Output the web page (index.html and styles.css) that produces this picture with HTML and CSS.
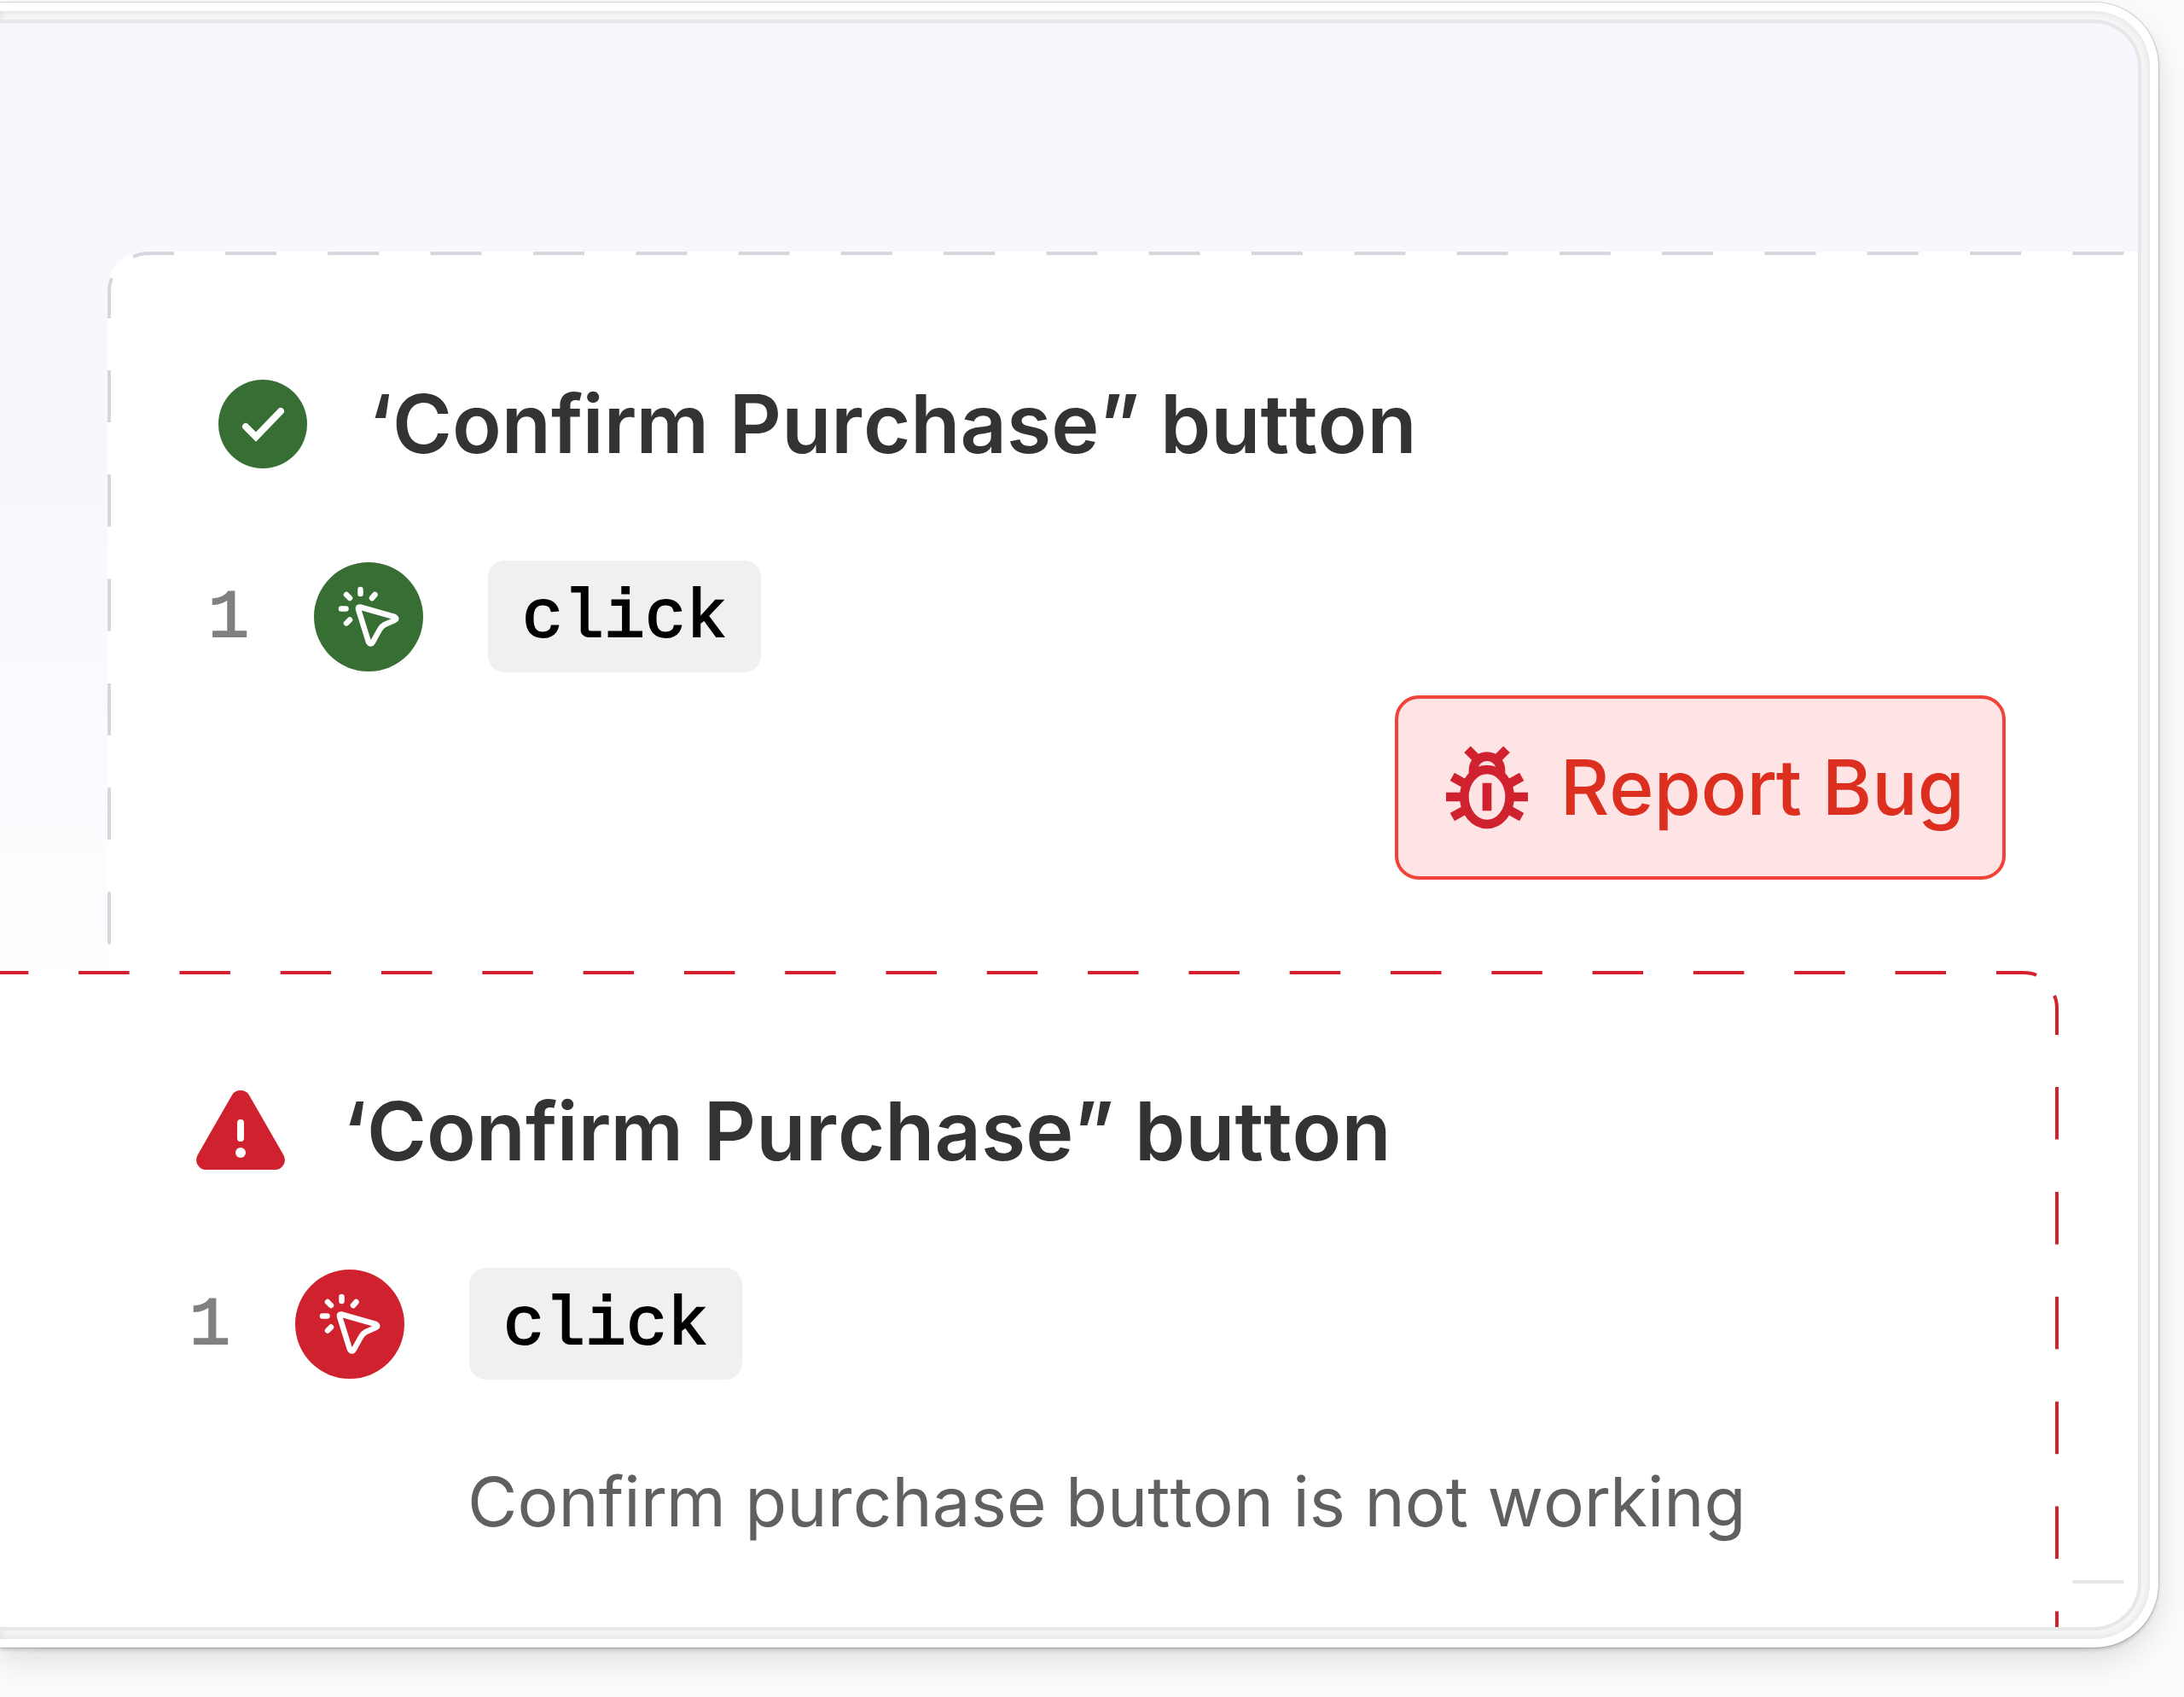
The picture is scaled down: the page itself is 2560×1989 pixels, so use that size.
FILE: index.html
```
<!DOCTYPE html>
<html lang="en">
<head>
<meta charset="utf-8">
<title>Test run</title>
<link rel="stylesheet" href="styles.css">
</head>
<body>
<svg class="sprite" aria-hidden="true">
  <symbol id="cursor-click" viewBox="0 0 128 128">
    <g fill="none" stroke="#fff" stroke-width="6.5" stroke-linecap="round" stroke-linejoin="round">
      <path d="M54 52.5L94.5 64Q98 66 94.5 68L83 73Q79 75 77 79L69 93.500Q66.500 97.500 64 93.500L52 55Q51.500 52 54 52.500Z"/>
      <path d="M54.500 32V37M38 38L42 42M71.500 38L68 42M32 54.500H37.500M42 67.500L38 71.500"/>
    </g>
  </symbol>
</svg>
<main class="frame">
  <div class="stage">
    <section class="card card-pass">
      <svg class="outline" aria-hidden="true">
        <path d="M78 2H48Q38 2 30 6"/>
        <path d="M5 31Q2 38 2 48V78"/>
        <line x1="138" y1="2" x2="100%" y2="2" stroke-dasharray="60 60.3"/>
        <line x1="2" y1="139" x2="2" y2="100%" stroke-dasharray="61 61.3"/>
        <svg class="corner" x="0" y="100%"><line x1="138" y1="-2" x2="2500" y2="-2" stroke-dasharray="60 60.3" class="faint"/></svg>
      </svg>
      <header class="title-row">
        <svg class="status" viewBox="0 0 104 104" aria-hidden="true"><circle cx="52" cy="52" r="52" fill="#376e34"/><path d="M32 55L44 67L73 37" fill="none" stroke="#fff" stroke-width="8" stroke-linecap="round" stroke-linejoin="miter"/></svg>
        <h2>‘Confirm Purchase” button</h2>
      </header>
      <div class="step">
        <span class="num">1</span>
        <svg class="action pass" aria-hidden="true"><use href="#cursor-click"/></svg>
        <code>click</code>
      </div>
      <button class="report" type="button">
        <svg viewBox="70 70 288 292" aria-hidden="true">
          <g fill="none" stroke="#cf212e" stroke-width="32">
            <ellipse cx="214" cy="249" rx="80" ry="96"/>
            <path d="M166 170V155A48 48 0 0 1 262 155V170"/>
            <path d="M145 82L178 115M283 82L250 115M70 249H125M358 249H303M92 178L140 205M336 178L288 205M92 320L140 293M336 320L288 293M214 200V298"/>
          </g>
        </svg>
        Report Bug
      </button>
    </section>
    <section class="card card-fail">
      <svg class="outline outline-fail" aria-hidden="true">
        <svg class="corner" x="100%" y="0">
          <path d="M-73 2H-42Q-32 2 -26 5"/>
          <path d="M-5 29Q-2 35 -2 44V75"/>
          <line x1="-132" y1="2" x2="-5000" y2="2" stroke-dasharray="59.500 58.800"/>
          <line x1="-2" y1="136" x2="-2" y2="5000" stroke-dasharray="61.500 61.400"/>
        </svg>
      </svg>
      <header class="title-row">
        <svg class="status" viewBox="0 0 104 104" aria-hidden="true"><path fill="#cf212e" d="M42 9.500Q45 4 52 4T62 9.500L102.500 80Q106 88 101 93Q98 97 93 97H11Q6 97 3 93Q-2 88 1.500 80Z"/><path d="M52 42V60" stroke="#fff" stroke-width="8" stroke-linecap="round"/><circle cx="52" cy="77" r="6" fill="#fff"/></svg>
        <h2>‘Confirm Purchase” button</h2>
      </header>
      <div class="step">
        <span class="num">1</span>
        <svg class="action fail" aria-hidden="true"><use href="#cursor-click"/></svg>
        <code>click</code>
      </div>
      <p class="note">Confirm purchase button is not working</p>
    </section>
  </div>
</main>
</body>
</html>
```
FILE: styles.css
```
* { box-sizing: border-box; }

body {
  margin: 0;
  padding: 3px 30px 58px 0;
  background: #fcfcfc;
  color: #333;
  font-family: Inter, "Liberation Sans", sans-serif;
  font-kerning: none;
  overflow-x: hidden;
}

.sprite { display: none; }

.frame {
  padding: 10px 10px 10px 0;
  border: 10px solid #fff;
  border-left: 0;
  border-radius: 0 75px 75px 0;
  background: #f5f5f5;
  box-shadow: inset 0 0 8px rgba(0, 0, 0, .1), 0 0 1px 1px rgba(0, 0, 0, .14), 0 3px 4px rgba(0, 0, 0, .16), 0 16px 40px rgba(0, 0, 0, .12);
}

.stage {
  display: grid;
  grid-template-columns: 126px 1fr 93px;
  grid-template-rows: 268px 843px 718px 51px;
  border: 4px solid #e5e7e9;
  border-left: 0;
  border-radius: 0 56px 56px 0;
  background: linear-gradient(#f8f7fe 30%, #fff 66%);
  overflow: hidden;
}

.card {
  position: relative;
  display: flex;
  flex-direction: column;
  background: #fff;
}

.card-pass {
  grid-area: 2 / 2 / 4 / 4;
  padding: 144px 155px 0 118px;
  border-radius: 44px 0 0 0;
}

.card-fail {
  grid-area: 3 / 1 / 5 / 3;
  padding: 130px 100px 0 222px;
  border-radius: 0 36px 0 0;
}

.outline {
  position: absolute;
  inset: 0;
  width: 100%;
  height: 100%;
  fill: none;
  stroke: #d6d6dc;
  stroke-width: 4;
}

.outline-fail { stroke: #d4202f; }
.corner { overflow: visible; }
.faint { stroke: #e5e7e9; }

.title-row, .step { display: flex; align-items: center; }
.title-row { gap: 72px; padding-left: 12px; }
.card-fail .title-row { gap: 68px; padding-left: 8px; }

h2 {
  margin: 0;
  font-size: 95px;
  line-height: 116px;
  font-weight: 600;
  white-space: nowrap;
}

.status { flex: none; width: 104px; height: 104px; }

.step {
  margin-top: 102px;
  font: 80px/131px "Liberation Mono", monospace;
}

.num { width: 124px; padding-top: 4px; line-height: 127px; color: #808080; -webkit-text-stroke: 2px #808080; }

.action {
  width: 128px;
  height: 128px;
  margin-right: 76px;
  border-radius: 50%;
}

.pass { background: #376e34; }
.fail { background: #cf212e; }

code {
  padding: 4px 40px 0;
  border-radius: 20px;
  background: #f0f0f0;
  color: #000;
  font: inherit;
  line-height: 127px;
  -webkit-text-stroke: 2px #000;
}

.report {
  display: flex;
  align-items: center;
  align-self: flex-end;
  gap: 38px;
  height: 216px;
  margin-top: 27px;
  padding: 0 44px 0 56px;
  border: 4px solid #f04438;
  border-radius: 28px;
  background: #fee4e4;
  color: #dc2f20;
  font: 500 89px/106px Inter, sans-serif;
  font-kerning: none;
}

.report svg { width: 96px; height: 98px; }

.note {
  margin: 90px 0 0 326px;
  color: #606060;
  font-size: 80px;
  line-height: 106px;
  white-space: nowrap;
}
```
